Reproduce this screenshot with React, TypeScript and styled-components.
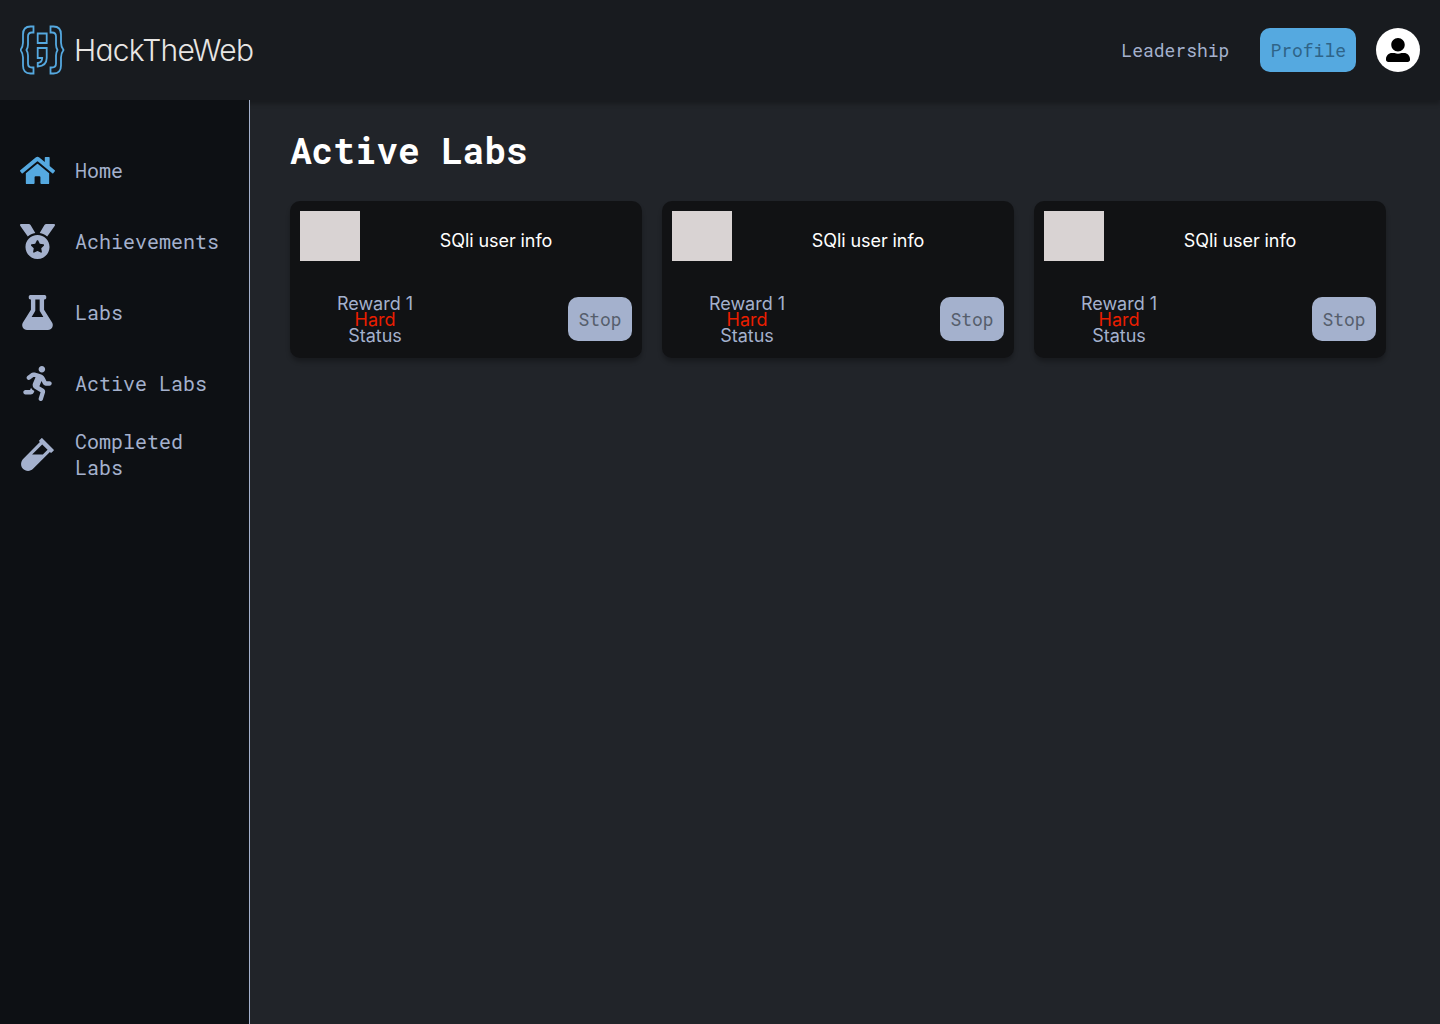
import React from 'react';
import styled, { createGlobalStyle } from 'styled-components';
import { FaHome, FaMedal, FaFlask, FaRunning, FaVial, FaUserAlt } from 'react-icons/fa';

const mono = `'Roboto Mono', 'DejaVu Sans Mono', monospace`;
const sans = `Inter, 'Liberation Sans', sans-serif`;

const GlobalStyle = createGlobalStyle`
  * { box-sizing: border-box; }
  body { margin: 0; background: #212429; font-family: ${sans}; }
`;

const Page = styled.div`
  min-height: 1024px;
  display: flex;
  flex-direction: column;
`;

const Header = styled.header`
  position: relative;
  z-index: 1;
  height: 100px;
  padding: 0 20px;
  display: flex;
  align-items: center;
  justify-content: space-between;
  background: #181b1f;
  box-shadow: 0 4px 4px rgba(0, 0, 0, 0.25);
`;

const Nav = styled.nav`
  display: flex;
  align-items: center;
  gap: 20px;
`;

const Button = styled.button<{ $bg?: string; $color?: string }>`
  height: 44px;
  min-width: 64px;
  padding: 0 10px;
  border: 0;
  border-radius: 10px;
  background: ${(p) => p.$bg ?? 'transparent'};
  color: ${(p) => p.$color ?? '#a4b1cd'};
  font: 400 18px/24px ${mono};
`;

const NavLink = styled(Button)`
  margin-right: 1px;
`;

const Avatar = styled.div`
  width: 44px;
  height: 44px;
  border-radius: 50%;
  background: #fff;
  color: #000;
  display: grid;
  place-items: center;
`;

const Body = styled.div`
  flex: 1;
  display: flex;
`;

const Sidebar = styled.aside`
  position: relative;
  z-index: 2;
  width: 250px;
  padding: 53px 20px 0;
  background: #0d1014;
  border-right: 1px solid #a4b1cd;
  display: flex;
  flex-direction: column;
  gap: 36px;
`;

const MenuItem = styled.a<{ $active?: boolean }>`
  height: 35px;
  display: flex;
  align-items: center;
  gap: 20px;
  color: #a4b1cd;
  font: 400 20px/26px ${mono};
  svg {
    flex: none;
    color: ${(p) => (p.$active ? '#55a9e0' : '#a4b1cd')};
  }
  span {
    padding-bottom: 1px;
  }
`;

const Main = styled.main`
  flex: 1;
  padding: 26px 40px 0;
`;

const Title = styled.h1`
  margin: 0 0 27px;
  color: #fff;
  font: 700 36px/48px ${mono};
`;

const Cards = styled.div`
  display: flex;
  gap: 20px;
`;

const Card = styled.article`
  width: 352px;
  height: 157px;
  padding: 10px;
  border-radius: 10px;
  background: #111214;
  box-shadow: 0 4px 4px rgba(0, 0, 0, 0.25);
  display: flex;
  flex-direction: column;
  justify-content: space-between;
`;

const CardTop = styled.div`
  display: flex;
`;

const Thumb = styled.div`
  width: 60px;
  height: 50px;
  background: #d9d3d3;
`;

const CardTitle = styled.div`
  flex: 1;
  padding-top: 19px;
  text-align: center;
  color: #fff;
  font-size: 18px;
  letter-spacing: -0.08px;
  line-height: 22px;
`;

const CardBottom = styled.div`
  display: flex;
  align-items: center;
  justify-content: space-between;
  padding-bottom: 4px;
`;

const Facts = styled.div`
  width: 150px;
  padding-top: 2px;
  text-align: center;
  color: #a4b1cd;
  font-size: 18px;
  line-height: 16px;
`;

const Difficulty = styled.div`
  color: #ea1e00;
`;

const Logo = () => (
  <svg width="240" height="50" viewBox="20 25 240 50" fill="none">
    <g stroke="#55a9e0" strokeWidth="1.8">
      <path d="M33.500 26.500h-3q-7.500 0-7.500 8v8q0 4-2.500 7.500q2.500 3.500 2.500 7.500v8q0 8 7.500 8h3v-6h-1.500q-4 0-4-4v-8q0-3-1.500-5.500q1.500-2.500 1.500-5.500v-8q0-4 4-4h1.500z" />
      <path d="M50.500 26.500h3q7.500 0 7.500 8v8q0 4 2.500 7.500q-2.500 3.500-2.500 7.500v8q0 8-7.500 8h-3v-6h1.500q4 0 4-4v-8q0-3 1.500-5.500q-1.500-2.500-1.500-5.500v-8q0-4-4-4h-1.500z" />
      <path d="M37.700 33.500h9v9.500h-9z" />
      <path d="M37.700 48h9v10q0 8-9 8.500v-3.500q4.500-.5 4.500-5h-4.500z" />
    </g>
    <text x="74" y="61" textLength="180" fill="#e8e6e4" fontFamily="Inter, sans-serif" fontSize="30" fontWeight="300" style={{ fontFeatureSettings: '"cv11"' }}>HackTheWeb</text>
  </svg>
);

const menu = [
  { label: 'Home', icon: FaHome },
  { label: 'Achievements', icon: FaMedal },
  { label: 'Labs', icon: FaFlask },
  { label: 'Active Labs', icon: FaRunning },
  { label: 'Completed Labs', icon: FaVial },
];

const labs = [1, 2, 3];

export default function App() {
  return (
    <Page>
      <GlobalStyle />
      <Header>
        <Logo />
        <Nav>
          <NavLink>Leadership</NavLink>
          <Button $bg="#55a9e0" $color="#2f6488">Profile</Button>
          <Avatar><FaUserAlt size={24} /></Avatar>
        </Nav>
      </Header>
      <Body>
        <Sidebar>
          {menu.map(({ label, icon: Icon }) => (
            <MenuItem key={label} $active={label === 'Home'}>
              <Icon size={35} />
              <span>{label}</span>
            </MenuItem>
          ))}
        </Sidebar>
        <Main>
          <Title>Active Labs</Title>
          <Cards>
            {labs.map((id) => (
              <Card key={id}>
                <CardTop>
                  <Thumb />
                  <CardTitle>SQli user info</CardTitle>
                </CardTop>
                <CardBottom>
                  <Facts>
                    <div>Reward 1</div>
                    <Difficulty>Hard</Difficulty>
                    <div>Status</div>
                  </Facts>
                  <Button $bg="#a4b1cd" $color="#565e6c">Stop</Button>
                </CardBottom>
              </Card>
            ))}
          </Cards>
        </Main>
      </Body>
    </Page>
  );
}
